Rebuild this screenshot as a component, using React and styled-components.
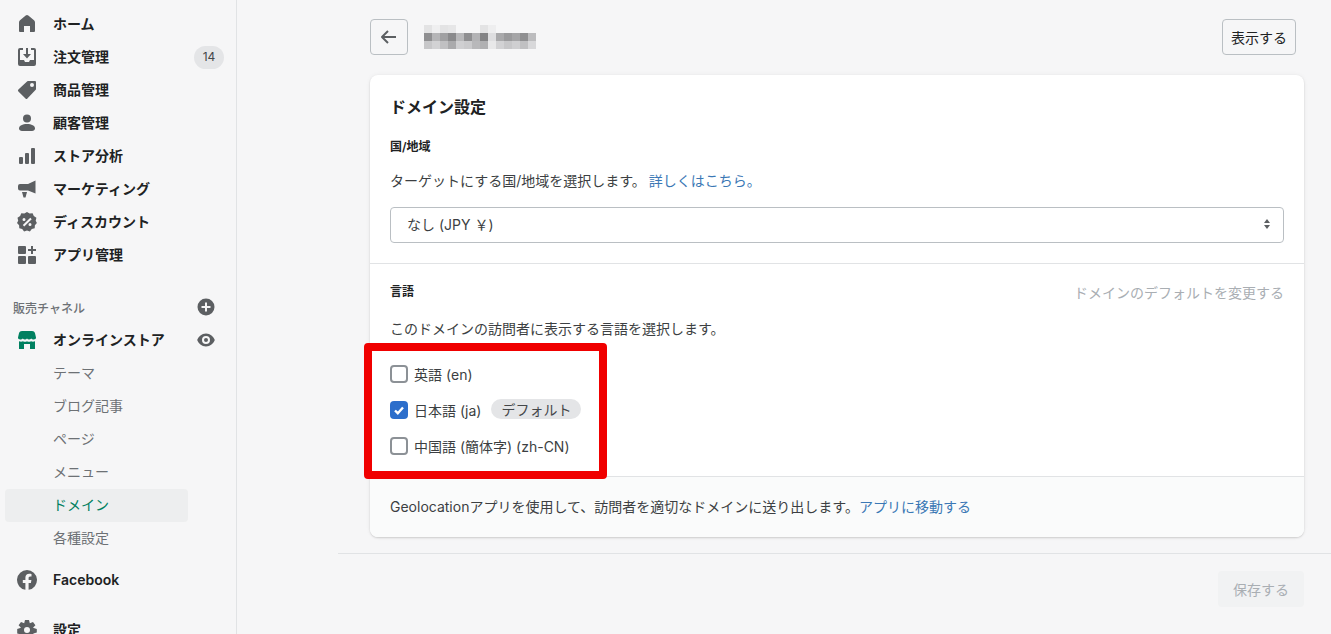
import React from 'react';
import styled, { createGlobalStyle } from 'styled-components';

const Global = createGlobalStyle`
  html, body { margin: 0; padding: 0; height: 634px; overflow: hidden; background: #f6f6f7; }
  * { box-sizing: border-box; }
  body { font-family: Inter, "Noto Sans CJK JP", sans-serif; font-size: 14px; color: #202223; }
`;

const Page = styled.div`display: flex; width: 1331px; height: 634px; overflow: hidden; position: relative;`;
const Sidebar = styled.nav`width: 237px; height: 634px; flex: none; border-right: 1px solid #e1e3e5; padding-top: 7.5px; overflow: hidden;`;
const NavRow = styled.div`
  display: flex; align-items: center; height: 33px; padding: 0 12px 0 17px; gap: 16px;
  font-weight: 600; color: #202223; line-height: 20px;
  margin-top: ${p => p.$top || 0}px;
`;
const IconBox = styled.span`width: 20px; height: 20px; flex: none; display: flex; color: ${p => p.$color || '#5c5f62'}; svg { width: 20px; height: 20px; fill: currentColor; }`;
const NavLabel = styled.span`flex: 1;`;
const Count = styled.span`
  width: 30px; height: 23px; border-radius: 12px; background: #e4e5e7; color: #44474a;
  font-size: 12px; font-weight: 400; display: flex; align-items: center; justify-content: center;
`;
const SectionRow = styled.div`
  display: flex; align-items: center; justify-content: space-between; height: 33px;
  margin-top: 19px; padding: 0 12px 0 13px; font-size: 12px; font-weight: 500; color: #6d7175;
`;
const TrailIcon = styled.span`width: 20px; height: 20px; display: flex; margin-right: 8px; color: #5c5f62; svg { width: 20px; height: 20px; fill: currentColor; }`;
const SubRow = styled.div`
  display: flex; align-items: center; height: 33px; width: 183px; margin-left: 5px; padding-left: 48px;
  border-radius: 4px; font-weight: 400; line-height: 20px;
  color: ${p => p.$active ? '#008060' : '#6d7175'};
  background: ${p => p.$active ? '#edeeef' : 'transparent'};
`;

const Main = styled.main`flex: 1; min-width: 0; display: flex; flex-direction: column; padding-top: 19px;`;
const Inner = styled.div`margin-left: 133px; width: 934px;`;
const Header = styled.header`display: flex; align-items: center; gap: 16px; height: 36px; padding-right: 8px; margin-bottom: 20px;`;
const OutlineButton = styled.button`
  height: 36px; min-width: 38px; padding: 0 8px; background: #f6f6f7; border: 1px solid #babfc3; border-radius: 4px;
  font: inherit; color: #202223; display: flex; align-items: center; justify-content: center;
  svg { width: 20px; height: 20px; fill: #5c5f62; }
`;
const Spacer = styled.div`flex: 1;`;
const Pixelated = styled.svg`width: 112px; height: 24px; flex: none; display: block;`;

const Card = styled.section`
  background: #fff; border-radius: 8px; overflow: hidden; height: 462px;
  box-shadow: 0 0 5px rgba(23,24,24,.05), 0 1px 2px rgba(0,0,0,.15);
`;
const TopSection = styled.div`height: 189px; padding: 20px 20px 0; border-bottom: 1px solid #e1e3e5;`;
const CardTitle = styled.h2`margin: 0 0 20px; font-size: 16px; line-height: 24px; font-weight: 600;`;
const FieldLabel = styled.h3`margin: 0; font-size: 12px; line-height: 16px; font-weight: 600;`;
const BodyLine = styled.p`margin: ${p => p.$top}px 0 0; line-height: 20px; color: #3c3f42;`;
const Link = styled.a`color: #3b78b5; margin-left: ${p => p.$gap}px;`;
const SelectBox = styled.div`
  margin-top: 16px; height: 36px; border: 1px solid #babfc3; border-radius: 4px;
  display: flex; align-items: center; justify-content: space-between; padding: 0 10px 2px 16px; color: #3c3f42;
  svg { width: 12px; height: 16px; fill: #5c5f62; }
`;
const LangSection = styled.div`height: 213px; padding: 19px 20px 0; border-bottom: 1px solid #e1e3e5;`;
const LangHead = styled.div`display: flex; align-items: center; justify-content: space-between; height: 18px;`;
const MutedLink = styled.span`color: #a9aeb3;`;
const Options = styled.div`margin-top: 25px; display: flex; flex-direction: column; gap: 16px;`;
const Option = styled.label`display: flex; align-items: center; height: 20px; color: #3c3f42; gap: 6px;`;
const Check = styled.span`
  width: 18px; height: 18px; border-radius: 4px; flex: none; display: flex; align-items: center; justify-content: center;
  border: ${p => p.$on ? 'none' : '2px solid #8c9196'};
  background: ${p => p.$on ? '#2c6ecb' : '#fff'};
  svg { width: 14px; height: 14px; fill: none; stroke: #fff; stroke-width: 2.4; }
`;
const Pill = styled.span`
  margin: 0 0 2px 4px; height: 20px; padding: 0 10px; border-radius: 10px; background: #e4e5e7; color: #44474a;
  display: flex; align-items: center;
`;
const FootNote = styled.div`height: 60px; background: #fafbfb; padding: 0 20px 2px; display: flex; align-items: center; color: #3c3f42;`;
const PageFoot = styled.footer`
  margin: 16px 0 0 101px; border-top: 1px solid #e1e3e5; padding: 17px 27px 0 0; display: flex; justify-content: flex-end;
`;
const SaveButton = styled.button`
  width: 86px; height: 36px; border: none; border-radius: 4px; background: #f1f2f3; color: #a9aeb3; font: inherit;
`;
const Highlight = styled.div`
  position: absolute; left: 364px; top: 343px; width: 243px; height: 136px;
  border: 8px solid #f00000; border-radius: 4px; pointer-events: none;
`;

const Icons = {
  home: <path d="M10 1c.5 0 .9.2 1.300.5l5.700 4.700c.7.6 1 1.300 1 2.200V17a1 1 0 0 1-1 1h-4v-6H7v6H3a1 1 0 0 1-1-1V8.400c0-.9.3-1.600 1-2.200l5.700-4.700C9.100 1.200 9.500 1 10 1z" />,
  orders: <path d="M1 3a2 2 0 0 1 2-2h3v2H3v10h4l1 2h4l1-2h4V3h-3V1h3a2 2 0 0 1 2 2v14a2 2 0 0 1-2 2H3a2 2 0 0 1-2-2zM9 1h2v6h3l-4 4.500L6 7h3z" />,
  tag: <path fillRule="evenodd" d="M11 1h7a1 1 0 0 1 1 1v7a1 1 0 0 1-.3.7l-8.300 8.900a1.300 1.300 0 0 1-1.900 0L1.400 11.500a1.300 1.300 0 0 1 0-1.900l8.900-8.300A1 1 0 0 1 11 1zm4 6a2 2 0 1 0 0-4 2 2 0 0 0 0 4z" />,
  person: <><circle cx="10" cy="5.500" r="4" /><path d="M10 11c4.500 0 8 1.600 8 4.500 0 1.600-1.300 2.500-3 2.500H5c-1.700 0-3-.9-3-2.500C2 12.600 5.500 11 10 11z" /></>,
  bars: <><rect x="2" y="11" width="4" height="7" rx="1" /><rect x="8" y="7" width="4" height="11" rx="1" /><rect x="14" y="2" width="4" height="16" rx="1" /></>,
  mega: <><path d="M18.500 1.500v13L11 11.500H3a2 2 0 0 1-2-2V7a2 2 0 0 1 2-2h8z" /><path d="M5 13h5l-1.500 5.500H6.500z" /></>,
  discount: <path fillRule="evenodd" d="M10 0l2.600 1.600 3-.3 1.200 2.800 2.600 1.600-.7 3L19.900 11l-2 2.300-.2 3-2.900.8-1.900 2.300-2.900-1-2.900 1-1.900-2.300-2.900-.8-.2-3L0 11l1.200-2.300-.7-3 2.600-1.600L4.300 1.300l3 .3zM7 6a1.500 1.500 0 1 0 0 3 1.500 1.500 0 0 0 0-3zm6 5a1.500 1.500 0 1 0 0 3 1.500 1.500 0 0 0 0-3zm.3-5.200L5.800 13l1.400 1.400 7.500-7.200z" />,
  apps: <path d="M2 1h6a1 1 0 0 1 1 1v6a1 1 0 0 1-1 1H2a1 1 0 0 1-1-1V2a1 1 0 0 1 1-1zm0 10h6a1 1 0 0 1 1 1v6a1 1 0 0 1-1 1H2a1 1 0 0 1-1-1v-6a1 1 0 0 1 1-1zm10 0h6a1 1 0 0 1 1 1v6a1 1 0 0 1-1 1h-6a1 1 0 0 1-1-1v-6a1 1 0 0 1 1-1zM14 1h2v3h3v2h-3v3h-2V6h-3V4h3z" />,
  store: <path d="M5 1h10c1.500 0 2.600.8 3 2.200l1 4.300c.2 1.100-1 2-2.300 2-1 0-1.900-.4-2.400-1-.6.6-1.500 1-2.300 1-.8 0-1.500-.4-2-1-.5.6-1.200 1-2 1-.8 0-1.700-.4-2.300-1-.5.6-1.400 1-2.400 1C2 9.500.8 8.600 1 7.500l1-4.300C2.400 1.800 3.500 1 5 1zM2 11.200c1.500.7 3 .5 4 0 1.300.8 2.700.8 4 0 1.300.8 2.700.8 4 0 1 .5 2.500.7 4 0V19h-5v-5H7v5H2z" />,
  facebook: <path fillRule="evenodd" d="M10 0a10 10 0 0 1 1.600 19.870V12.900h2.300l.5-2.900h-2.800V8.100c0-.8.4-1.600 1.600-1.600h1.300V4s-1.200-.2-2.300-.2c-2.300 0-3.800 1.400-3.800 3.900V10H5.800v2.900h2.600v6.970A10 10 0 0 1 10 0z" />,
  gear: <path fillRule="evenodd" d="M8 0h4l.8 3.200 3.200-1.200 2.400 3.300-2.400 2.500L19.800 9v3.500l-3.500.9.800 3.400-3.300 1.700L11.500 17h-3l-2.300 2.500-3.300-1.700.8-3.400-3.500-.9V9l3.800-1.200L1.600 5.300 4 2l3.200 1.200zM10 7a3 3 0 1 0 0 6 3 3 0 0 0 0-6z" />,
  plus: <path fillRule="evenodd" d="M10 1.500a8.500 8.500 0 1 1 0 17 8.500 8.500 0 0 1 0-17zM9 5.500V9H5.500v2H9v3.500h2V11h3.500V9H11V5.500z" />,
  eye: <path fillRule="evenodd" d="M10 3.500c4.300 0 7.500 3.200 8.800 6.500-1.300 3.300-4.500 6.500-8.800 6.500S2.500 13.300 1.200 10C2.500 6.700 5.700 3.500 10 3.500zM10 6a4 4 0 1 0 0 8 4 4 0 0 0 0-8zm0 2a2 2 0 1 1 0 4 2 2 0 0 1 0-4z" />,
};

const Ico = ({ name, color }) => (
  <IconBox $color={color}><svg viewBox="0 0 20 20">{Icons[name]}</svg></IconBox>
);

const mainNav = [
  ['home', 'ホーム'], ['orders', '注文管理', '14'], ['tag', '商品管理'], ['person', '顧客管理'],
  ['bars', 'ストア分析'], ['mega', 'マーケティング'], ['discount', 'ディスカウント'], ['apps', 'アプリ管理'],
];
const subNav = ['テーマ', 'ブログ記事', 'ページ', 'メニュー', 'ドメイン', '各種設定'];

const blur = [
  [0,0,'#e3e3e4'],[8,0,'#efeff0'],[16,0,'#e3e3e4'],[24,0,'#e6e6e7'],[56,0,'#e3e3e4'],[64,0,'#eeeeef'],
  [0,8,'#8f8f91'],[8,8,'#b5b5b7'],[16,8,'#a0a0a2'],[24,8,'#8a8a8c'],[32,8,'#b8b8ba'],[40,8,'#8f8f91'],[48,8,'#b3b3b5'],[56,8,'#838385'],[64,8,'#dedee0'],[72,8,'#a9a9ab'],[80,8,'#9a9a9c'],[88,8,'#a5a5a7'],[96,8,'#8f8f91'],[104,8,'#bcbcbe'],
  [0,16,'#c7c7c9'],[8,16,'#d2d2d4'],[16,16,'#c0c0c2'],[24,16,'#aaaaac'],[32,16,'#cfcfd1'],[40,16,'#cacacc'],[48,16,'#b8b8ba'],[56,16,'#b0b0b2'],[64,16,'#e8e8e9'],[72,16,'#d2d2d4'],[80,16,'#c7c7c9'],[88,16,'#cfcfd1'],[96,16,'#c0c0c2'],[104,16,'#d8d8da'],
];

export default function App() {
  return (
    <Page>
      <Global />
      <Sidebar>
        {mainNav.map(([icon, label, count]) => (
          <NavRow key={label}>
            <Ico name={icon} />
            <NavLabel>{label}</NavLabel>
            {count && <Count>{count}</Count>}
          </NavRow>
        ))}
        <SectionRow>
          <span>販売チャネル</span>
          <TrailIcon><svg viewBox="0 0 20 20">{Icons.plus}</svg></TrailIcon>
        </SectionRow>
        <NavRow>
          <Ico name="store" color="#008060" />
          <NavLabel>オンラインストア</NavLabel>
          <TrailIcon><svg viewBox="0 0 20 20">{Icons.eye}</svg></TrailIcon>
        </NavRow>
        {subNav.map(label => (
          <SubRow key={label} $active={label === 'ドメイン'}>{label}</SubRow>
        ))}
        <NavRow $top={9}><Ico name="facebook" /><NavLabel>Facebook</NavLabel></NavRow>
        <NavRow $top={17}><Ico name="gear" /><NavLabel>設定</NavLabel></NavRow>
      </Sidebar>
      <Main>
        <Inner>
          <Header>
            <OutlineButton aria-label="戻る">
              <svg viewBox="0 0 20 20"><path d="M17 9H5.400l4.300-4.300-1.400-1.400-6 6a1 1 0 0 0 0 1.400l6 6 1.400-1.400L5.400 11H17z" /></svg>
            </OutlineButton>
            <Pixelated viewBox="0 0 112 24">
              {blur.map(([x, y, c]) => <rect key={`${x}-${y}`} x={x} y={y} width="8" height="8" fill={c} />)}
            </Pixelated>
            <Spacer />
            <OutlineButton>表示する</OutlineButton>
          </Header>
          <Card>
            <TopSection>
              <CardTitle>ドメイン設定</CardTitle>
              <FieldLabel>国/地域</FieldLabel>
              <BodyLine $top={16}>ターゲットにする国/地域を選択します。<Link $gap={3}>詳しくはこちら。</Link></BodyLine>
              <SelectBox>
                <span>なし (JPY ￥)</span>
                <svg viewBox="0 0 12 16"><path d="M6 3l3 4H3zM6 13L3 9h6z" /></svg>
              </SelectBox>
            </TopSection>
            <LangSection>
              <LangHead>
                <FieldLabel>言語</FieldLabel>
                <MutedLink>ドメインのデフォルトを変更する</MutedLink>
              </LangHead>
              <BodyLine $top={18}>このドメインの訪問者に表示する言語を選択します。</BodyLine>
              <Options>
                <Option><Check />英語 (en)</Option>
                <Option>
                  <Check $on><svg viewBox="0 0 14 14"><path d="M3 7.500l2.800 2.700L11 4.500" /></svg></Check>
                  日本語 (ja)<Pill>デフォルト</Pill>
                </Option>
                <Option><Check />中国語 (簡体字) (zh-CN)</Option>
              </Options>
            </LangSection>
            <FootNote>
              Geolocationアプリを使用して、訪問者を適切なドメインに送り出します。<Link $gap={0}>アプリに移動する</Link>
            </FootNote>
          </Card>
        </Inner>
        <PageFoot><SaveButton>保存する</SaveButton></PageFoot>
      </Main>
      <Highlight />
    </Page>
  );
}
